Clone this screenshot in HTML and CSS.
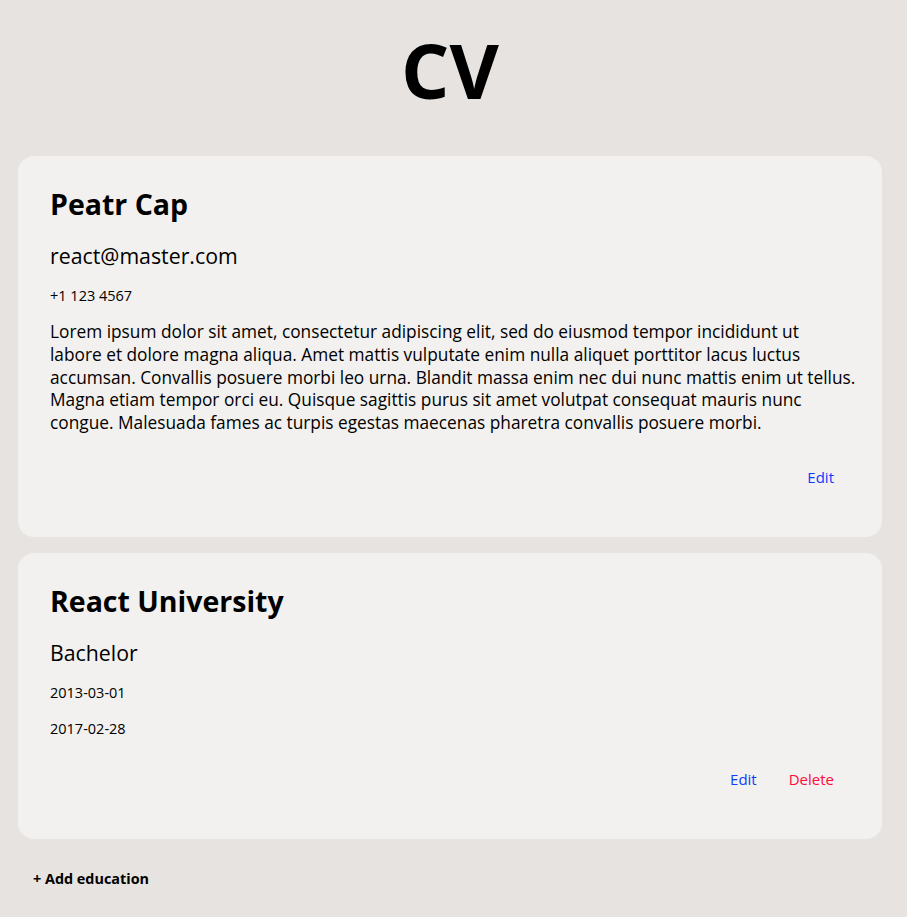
FILE: index.html
```html
<!DOCTYPE html>
<html lang="en">
<head>
<meta charset="utf-8">
<title>CV</title>
<link rel="stylesheet" href="styles.css">
</head>
<body>
<main class="app">
  <h1 class="title">CV</h1>
  <section class="card">
    <h2 class="card-title">Peatr Cap</h2>
    <p class="subtitle">react@master.com</p>
    <p class="small">+1 123 4567</p>
    <p class="text">Lorem ipsum dolor sit amet, consectetur adipiscing elit, sed do eiusmod tempor incididunt ut<br>labore et dolore magna aliqua. Amet mattis vulputate enim nulla aliquet porttitor lacus luctus<br>accumsan. Convallis posuere morbi leo urna. Blandit massa enim nec dui nunc mattis enim ut tellus.<br>Magna etiam tempor orci eu. Quisque sagittis purus sit amet volutpat consequat mauris nunc<br>congue. Malesuada fames ac turpis egestas maecenas pharetra convallis posuere morbi.</p>
    <div class="actions">
      <button class="btn btn-edit">Edit</button>
    </div>
  </section>
  <section class="card">
    <h2 class="card-title">React University</h2>
    <p class="subtitle">Bachelor</p>
    <p class="small">2013-03-01</p>
    <p class="small">2017-02-28</p>
    <div class="actions">
      <button class="btn btn-edit">Edit</button>
      <button class="btn btn-delete">Delete</button>
    </div>
  </section>
  <button class="add">+ Add education</button>
</main>
</body>
</html>
```
FILE: styles.css
```css
* { box-sizing: border-box; }
html, body { margin: 0; padding: 0; }
body {
  background: #e7e3e0;
  font-family: "Open Sans", "Noto Sans", sans-serif;
  color: #000;
}
.app {
  display: flex;
  flex-direction: column;
  padding: 0 25px 0 18px;
}
.title {
  margin: 22px 0 0;
  text-align: center;
  font-size: 76px;
  line-height: 96px;
  font-weight: 700;
  height: 134px;
}
.card {
  background: #f2f1ef;
  border-radius: 16px;
  padding: 28px 32px 40px;
  margin-bottom: 16px;
  display: flex;
  flex-direction: column;
}
.card-title {
  margin: 0;
  font-size: 28.5px;
  line-height: 40px;
  font-weight: 700;
}
.subtitle {
  margin: 18px 0 0;
  font-size: 21.3px;
  line-height: 28px;
}
.small {
  margin: 16px 0 0;
  font-size: 14.5px;
  line-height: 20px;
}
.text {
  margin: 15px 0 2px;
  font-size: 17.3px;
  line-height: 22.8px;
  white-space: nowrap;
}
.actions {
  display: flex;
  justify-content: flex-end;
  margin-top: 20px;
  height: 40px;
  align-items: center;
}
.btn {
  background: none;
  border: 0;
  padding: 0 16px;
  font: inherit;
  font-size: 15px;
  cursor: pointer;
}
.btn-edit { color: #0d3bff; }
.btn-delete { color: #ff0a3c; }
.add {
  align-self: flex-start;
  background: none;
  border: 0;
  padding: 0;
  margin: 14px 0 0 15px;
  font: inherit;
  font-size: 14.4px;
  font-weight: 700;
  cursor: pointer;
}
```
